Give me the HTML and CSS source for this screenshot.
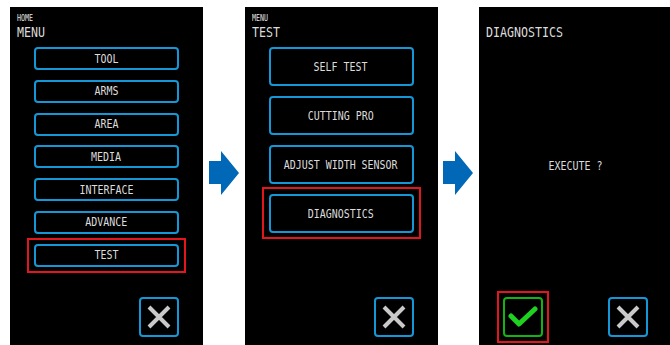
FILE: index.html
```html
<!DOCTYPE html>
<html lang="en">
<head>
  <meta charset="UTF-8" />
  <title>Diagnostics</title>
  <link rel="stylesheet" href="styles.css">
</head>
<body>
  <div class="flow">

    <div class="screen">
      <div class="crumb"><span>HOME</span></div>
      <div class="title"><span>MENU</span></div>
      <div class="menu menu-main">
        <div class="btn"><span>TOOL</span></div>
        <div class="btn"><span>ARMS</span></div>
        <div class="btn"><span>AREA</span></div>
        <div class="btn"><span>MEDIA</span></div>
        <div class="btn"><span>INTERFACE</span></div>
        <div class="btn"><span>ADVANCE</span></div>
        <div class="hl hl-main">
          <div class="btn"><span>TEST</span></div>
        </div>
      </div>
      <div class="foot foot-end">
        <div class="icon-btn">
          <svg width="24" height="24" viewBox="0 0 24 24"><path d="M2 2 L22 22 M22 2 L2 22" stroke="#c9c9c9" stroke-width="4" fill="none"/></svg>
        </div>
      </div>
    </div>

    <div class="arrow">
      <svg width="30" height="44" viewBox="0 0 30 44"><polygon points="0,10 12,10 12,0 30,22 12,44 12,33 0,33" fill="#0068b7"/></svg>
    </div>

    <div class="screen">
      <div class="crumb"><span>MENU</span></div>
      <div class="title"><span>TEST</span></div>
      <div class="menu menu-test">
        <div class="btn"><span>SELF TEST</span></div>
        <div class="btn"><span>CUTTING PRO</span></div>
        <div class="btn"><span>ADJUST WIDTH SENSOR</span></div>
        <div class="hl hl-test">
          <div class="btn"><span>DIAGNOSTICS</span></div>
        </div>
      </div>
      <div class="foot foot-end">
        <div class="icon-btn">
          <svg width="24" height="24" viewBox="0 0 24 24"><path d="M2 2 L22 22 M22 2 L2 22" stroke="#c9c9c9" stroke-width="4" fill="none"/></svg>
        </div>
      </div>
    </div>

    <div class="arrow">
      <svg width="30" height="44" viewBox="0 0 30 44"><polygon points="0,10 12,10 12,0 30,22 12,44 12,33 0,33" fill="#0068b7"/></svg>
    </div>

    <div class="screen screen-last">
      <div class="title title-top"><span>DIAGNOSTICS</span></div>
      <div class="prompt"><span>EXECUTE ?</span></div>
      <div class="foot foot-split">
        <div class="hl hl-ok">
          <div class="icon-btn ok">
            <svg width="40" height="40" viewBox="0 0 40 40"><path d="M8 19 L16 27 L32 12" stroke="#1fd21f" stroke-width="5" fill="none" stroke-linecap="round" stroke-linejoin="round"/></svg>
          </div>
        </div>
        <div class="icon-btn">
          <svg width="24" height="24" viewBox="0 0 24 24"><path d="M2 2 L22 22 M22 2 L2 22" stroke="#c9c9c9" stroke-width="4" fill="none"/></svg>
        </div>
      </div>
    </div>

  </div>
</body>
</html>
```

FILE: styles.css
```css
html, body {
  margin: 0;
  overflow: hidden;
  background: #fff;
}

body {
  font-family: "DejaVu Sans Mono", monospace;
  color: #dcdcdc;
}

.flow {
  display: flex;
  align-items: flex-start;
  padding: 7px 0 0 10px;
}

.screen {
  flex: none;
  width: 193px;
  height: 338px;
  box-sizing: border-box;
  background: #000;
  padding: 8px 24px 8px 7px;
  display: flex;
  flex-direction: column;
}

.screen-last {
  width: 191px;
  padding-right: 22px;
}

.arrow {
  flex: none;
  width: 41.5px;
  display: flex;
  justify-content: center;
  margin-top: 144px;
}

.crumb span,
.title span,
.btn span,
.prompt span {
  display: inline-block;
  white-space: pre;
  transform: scaleX(0.83);
}

.crumb {
  font-size: 8px;
  line-height: 8px;
  color: #e6e6e6;
}

.crumb span,
.title span {
  transform-origin: left center;
}

.title {
  font-size: 14px;
  line-height: 14px;
  margin-top: 2px;
}

.title-top {
  margin-top: 10px;
}

.menu {
  display: flex;
  flex-direction: column;
  margin: 8px 0 0 17px;
}

.menu-main {
  gap: 9.8px;
}

.menu-test {
  gap: 10px;
}

.btn {
  height: 23px;
  box-sizing: border-box;
  border: 2px solid #1596d6;
  border-radius: 4px;
  display: flex;
  align-items: center;
  justify-content: center;
  font-size: 12px;
  line-height: 12px;
}

.menu-test .btn {
  height: 39px;
}

.hl {
  border: 2px solid #e3161e;
}

.hl-main {
  padding: 4px 5px;
  margin: -6px -7px;
}

.hl-test {
  padding: 5px 5px 4px;
  margin: -7px -7px -6px;
}

.hl-ok {
  padding: 4px;
  margin: -6px;
}

.prompt {
  flex: 1;
  display: flex;
  align-items: center;
  justify-content: center;
  margin-left: 17px;
  padding-bottom: 4px;
  font-size: 12px;
  line-height: 12px;
}

.foot {
  margin-top: auto;
  margin-left: 17px;
  display: flex;
  align-items: center;
}

.foot-end {
  justify-content: flex-end;
}

.foot-split {
  margin-top: 0;
  justify-content: space-between;
}

.icon-btn {
  width: 40px;
  height: 40px;
  box-sizing: border-box;
  border: 2px solid #1596d6;
  border-radius: 4px;
  display: flex;
  align-items: center;
  justify-content: center;
}

.icon-btn.ok {
  border-color: #13b313;
}

.icon-btn.ok svg {
  margin: -2px;
}
```
